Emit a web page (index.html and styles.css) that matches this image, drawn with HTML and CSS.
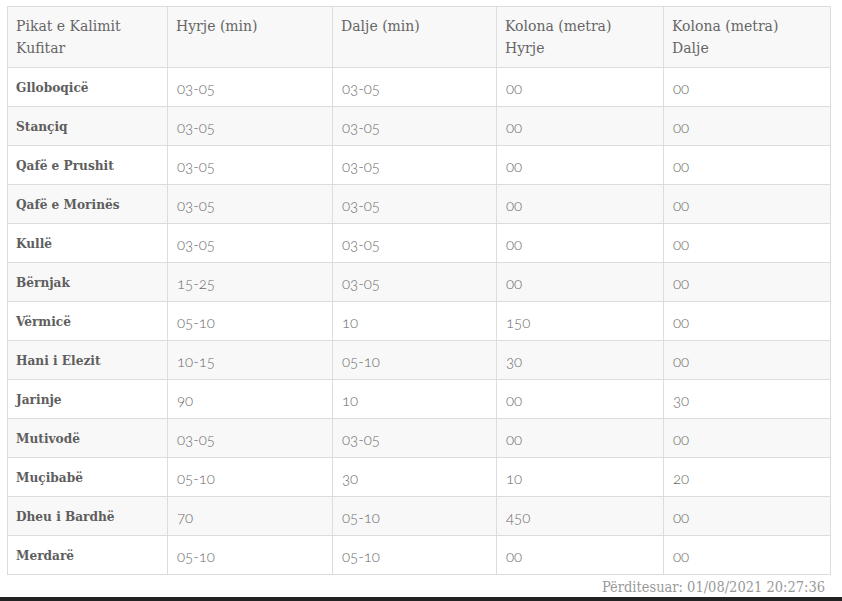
FILE: index.html
```html
<!DOCTYPE html>
<html>
<head>
<meta charset="utf-8">
<link rel="stylesheet" href="styles.css">
</head>
<body>
<div class="page">
  <table class="border-table">
    <colgroup>
      <col class="c1"><col class="c2"><col class="c3"><col class="c4"><col class="c5">
    </colgroup>
    <thead>
      <tr><th>Pikat e Kalimit Kufitar</th><th>Hyrje (min)</th><th>Dalje (min)</th><th>Kolona (metra) Hyrje</th><th>Kolona (metra) Dalje</th></tr>
    </thead>
    <tbody>
      <tr><td class="name">Glloboqicë</td><td>03-05</td><td>03-05</td><td>00</td><td>00</td></tr>
      <tr><td class="name">Stançiq</td><td>03-05</td><td>03-05</td><td>00</td><td>00</td></tr>
      <tr><td class="name">Qafë e Prushit</td><td>03-05</td><td>03-05</td><td>00</td><td>00</td></tr>
      <tr><td class="name">Qafë e Morinës</td><td>03-05</td><td>03-05</td><td>00</td><td>00</td></tr>
      <tr><td class="name">Kullë</td><td>03-05</td><td>03-05</td><td>00</td><td>00</td></tr>
      <tr><td class="name">Bërnjak</td><td>15-25</td><td>03-05</td><td>00</td><td>00</td></tr>
      <tr><td class="name">Vërmicë</td><td>05-10</td><td>10</td><td>150</td><td>00</td></tr>
      <tr><td class="name">Hani i Elezit</td><td>10-15</td><td>05-10</td><td>30</td><td>00</td></tr>
      <tr><td class="name">Jarinje</td><td>90</td><td>10</td><td>00</td><td>30</td></tr>
      <tr><td class="name">Mutivodë</td><td>03-05</td><td>03-05</td><td>00</td><td>00</td></tr>
      <tr><td class="name">Muçibabë</td><td>05-10</td><td>30</td><td>10</td><td>20</td></tr>
      <tr><td class="name">Dheu i Bardhë</td><td>70</td><td>05-10</td><td>450</td><td>00</td></tr>
      <tr><td class="name">Merdarë</td><td>05-10</td><td>05-10</td><td>00</td><td>00</td></tr>
    </tbody>
  </table>
  <div class="updated">Përditesuar: 01/08/2021 20:27:36</div>
</div>
<div class="bottom-bar"></div>
</body>
</html>
```
FILE: styles.css
```css
html, body {
  margin: 0;
  padding: 0;
  background: #fff;
}
body {
  width: 842px;
  height: 601px;
  overflow: hidden;
  display: flex;
  flex-direction: column;
}
.page {
  flex: 1;
  padding: 6px 11px 0 7px;
}
.border-table {
  border-collapse: collapse;
  width: 823px;
  table-layout: fixed;
}
.c1 { width: 160px; }
.c2 { width: 165px; }
.c3 { width: 164px; }
.c4 { width: 167px; }
.c5 { width: 167px; }
.border-table th,
.border-table td {
  border: 1px solid #dcdcdc;
  text-align: left;
  vertical-align: top;
  padding: 0 8px;
}
.border-table th {
  font-family: "DejaVu Serif", serif;
  font-weight: normal;
  font-size: 14px;
  line-height: 22px;
  color: #666;
  height: 61px;
  padding-top: 8px;
  padding-right: 22px;
  box-sizing: border-box;
  background: #f8f8f8;
}
.border-table td {
  height: 37px;
  vertical-align: middle;
  font-family: "Lato", sans-serif;
  font-weight: 300;
  font-variant-numeric: oldstyle-nums;
  font-size: 15px;
  color: #6a6a6a;
  padding-left: 9px;
  padding-top: 1px;
}
.border-table td.name {
  font-family: "DejaVu Serif Condensed", "DejaVu Serif", serif;
  font-weight: bold;
  font-size: 13.5px;
  color: #5e5e5e;
  padding-left: 8px;
  padding-top: 0;
  padding-bottom: 1px;
}
.border-table tbody tr:nth-child(even) td {
  background: #f8f8f8;
}
.updated {
  text-align: right;
  width: 818px;
  margin-top: 4px;
  font-family: "DejaVu Serif Condensed", "DejaVu Serif", serif;
  font-size: 14.5px;
  color: #999;
}
.bottom-bar {
  height: 4px;
  background: #222;
}
```
